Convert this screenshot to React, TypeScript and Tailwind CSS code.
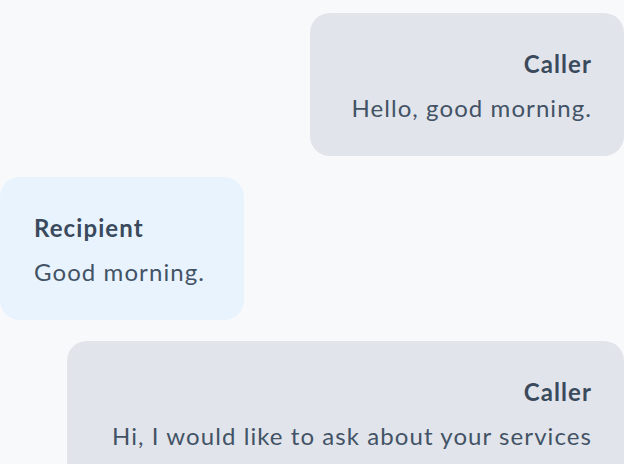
export default function App() {
  const font = { fontFamily: 'Lato, "Noto Sans", sans-serif' };
  return (
    <div className="w-[624px] h-[464px] overflow-hidden bg-[#f8f9fb]" style={font}>
      <div className="flex flex-col gap-[21px] pt-[13px]">
        <div className="self-end w-[314px] rounded-[20px] bg-[#e1e4ea] pt-[33px] pb-[30px] pr-[32px] text-right text-[24px] leading-[36px] tracking-[1.08px] text-[#435366]">
          <div className="font-bold text-[#3a4a5c] mb-[8px]">Caller</div>
          <div>Hello, good morning.</div>
        </div>
        <div className="self-start w-[244px] rounded-[20px] bg-[#e9f3fe] pt-[33px] pb-[30px] pl-[34px] text-left text-[24px] leading-[36px] tracking-[1.08px] text-[#435366]">
          <div className="font-bold text-[#3a4a5c] mb-[8px]">Recipient</div>
          <div>Good morning.</div>
        </div>
        <div className="self-end w-[557px] rounded-[20px] bg-[#e1e4ea] pt-[33px] pb-[30px] pr-[32px] text-right text-[24px] leading-[36px] tracking-[1.08px] text-[#435366]">
          <div className="font-bold text-[#3a4a5c] mb-[8px]">Caller</div>
          <div>Hi, I would like to ask about your services</div>
        </div>
      </div>
    </div>
  );
}
